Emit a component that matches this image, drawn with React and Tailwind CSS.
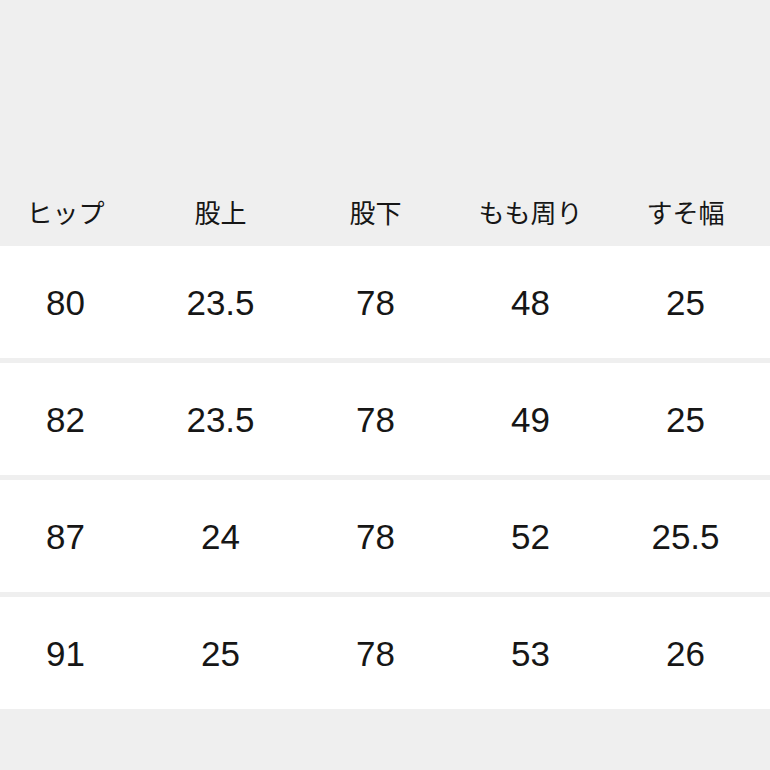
import React from 'react';

const headers = ['ヒップ', '股上', '股下', 'もも周り', 'すそ幅'];

const rows = [
  ['80', '23.5', '78', '48', '25'],
  ['82', '23.5', '78', '49', '25'],
  ['87', '24', '78', '52', '25.5'],
  ['91', '25', '78', '53', '26'],
];

const App = () => {
  return (
    <div className="w-[770px] h-[770px] overflow-hidden bg-[#efefef] text-[#161616]">
      <div className="h-[178px]" />

      {/* header */}
      <div className="grid grid-cols-[repeat(5,155px)] -ml-3 h-[68px] items-center">
        {headers.map((h) => (
          <div key={h} className="flex justify-center">
            <span
              className="text-[26px] leading-none whitespace-nowrap"
              style={{ fontFamily: '"Noto Sans CJK JP", sans-serif' }}
            >
              {h}
            </span>
          </div>
        ))}
      </div>

      {/* rows */}
      <div className="flex flex-col gap-[5px]">
        {rows.map((r, i) => (
          <div key={i} className="bg-white h-[112px]">
            <div className="grid grid-cols-[repeat(5,155px)] -ml-3 h-full items-center">
              {r.map((v, j) => (
                <div key={j} className="flex justify-center">
                  <span
                    className="text-[35px] leading-none"
                    style={{ fontFamily: '"Liberation Sans", Arial, sans-serif' }}
                  >
                    {v}
                  </span>
                </div>
              ))}
            </div>
          </div>
        ))}
      </div>
    </div>
  );
};

export default App;
